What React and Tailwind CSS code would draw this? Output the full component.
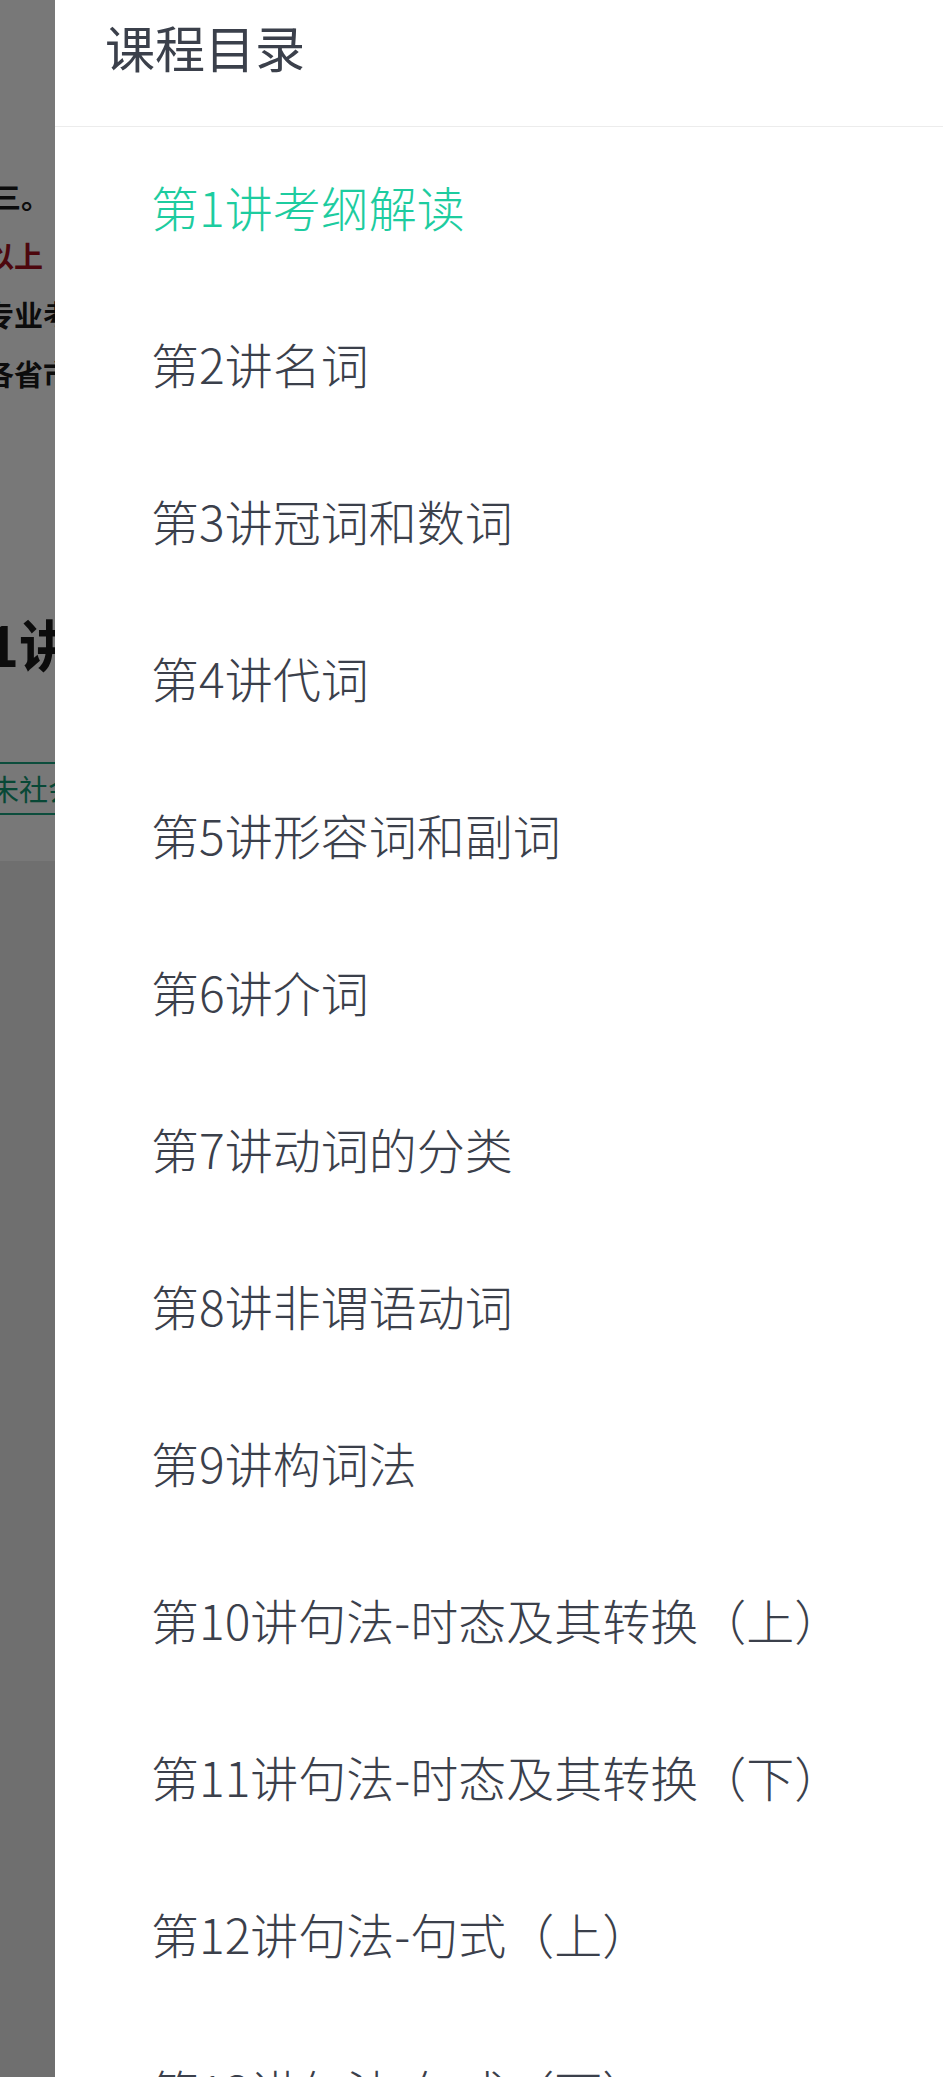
import React from 'react';

const lessons = [
    '第1讲考纲解读',
    '第2讲名词',
    '第3讲冠词和数词',
    '第4讲代词',
    '第5讲形容词和副词',
    '第6讲介词',
    '第7讲动词的分类',
    '第8讲非谓语动词',
    '第9讲构词法',
    '第10讲句法-时态及其转换（上）',
    '第11讲句法-时态及其转换（下）',
    '第12讲句法-句式（上）',
    '第13讲句法-句式（下）',
];

const font = { fontFamily: '"Noto Sans CJK SC", "Noto Sans", sans-serif' };

// the page under the drawer, only its left edge shows
const BackPage = () => (
    <div className="relative w-[55px] shrink-0 overflow-hidden">
        <div className="w-[600px] bg-white text-[29px] font-bold text-[#1a1a1a]">
            <div className="h-[167px]" />
            <div className="h-[59px] leading-[59px] ml-[-8px]">三。 ·</div>
            <div className="h-[59px] leading-[59px] ml-[-15px] text-[#a3101c]">以上</div>
            <div className="h-[59px] leading-[59px] ml-[-15px]">专业考</div>
            <div className="h-[59px] leading-[59px] ml-[-15px]">各省市</div>
            <div className="h-[208px]" />
            <div className="h-[64px] leading-[64px] ml-[-70px] text-[56px] font-bold">第1讲</div>
            <div className="h-[87px]" />
            <div className="ml-[-14px] h-[53px] w-[200px] border-2 border-[#1aa37f] leading-[49px] pl-[2px] text-[29px] font-normal text-[#129a74]">
                未社会
            </div>
            <div className="h-[46px]" />
        </div>
        <div className="h-[1300px] bg-[#ebebeb]" />
        <div className="absolute inset-0 bg-black/[0.53]" />
    </div>
);

export default function App() {
    return (
        <div className="flex h-[2077px] w-[943px] overflow-hidden bg-white" style={font}>
            <BackPage />
            <div className="flex flex-1 flex-col bg-white">
                <div className="flex h-[127px] shrink-0 items-start border-b border-[#ececec] pl-[50px] pt-[11px]">
                    <h1 className="text-[50px] font-normal leading-[70px] text-[#3b404b]">课程目录</h1>
                </div>
                <ul className="flex flex-col">
                    {lessons.map((name, i) => (
                        <li
                            key={name}
                            className={`flex h-[157px] shrink-0 items-center pl-[96px] text-[48px] font-light leading-none ${i === 0 ? 'text-[#1dcc9f]' : 'text-[#3b404b]'}`}
                        >
                            {name}
                        </li>
                    ))}
                </ul>
            </div>
        </div>
    );
}
